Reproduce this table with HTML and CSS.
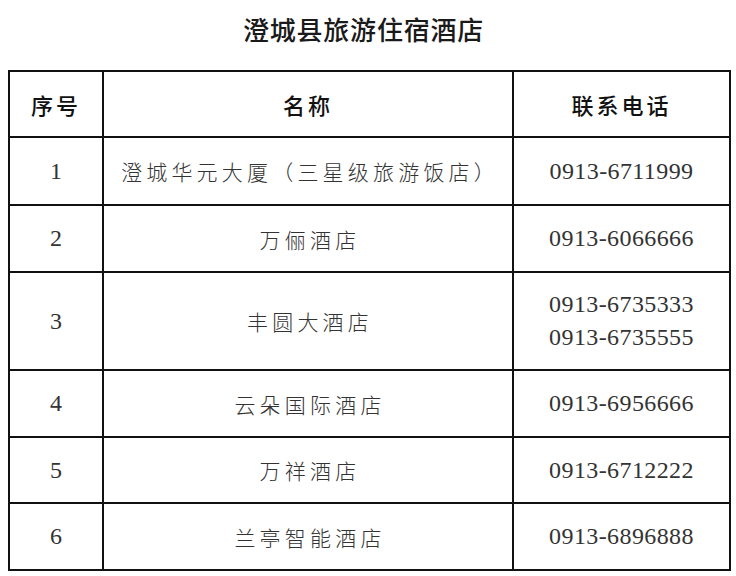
FILE: index.html
```html
<!DOCTYPE html>
<html lang="zh-CN">
<head>
<meta charset="utf-8">
<title>澄城县旅游住宿酒店</title>
<link rel="stylesheet" href="styles.css">
</head>
<body>
<div class="page">
  <h1 class="title">澄城县旅游住宿酒店</h1>
  <table class="hotels">
    <colgroup>
      <col class="c-no">
      <col class="c-name">
      <col class="c-tel">
    </colgroup>
    <thead>
      <tr class="r-head">
        <th>序号</th>
        <th>名称</th>
        <th>联系电话</th>
      </tr>
    </thead>
    <tbody>
      <tr class="r-1">
        <td class="no">1</td>
        <td class="name">澄城华元大厦（三星级旅游饭店）</td>
        <td class="tel">0913-6711999</td>
      </tr>
      <tr class="r-2">
        <td class="no">2</td>
        <td class="name">万俪酒店</td>
        <td class="tel">0913-6066666</td>
      </tr>
      <tr class="r-3">
        <td class="no">3</td>
        <td class="name">丰圆大酒店</td>
        <td class="tel"><div>0913-6735333</div><div>0913-6735555</div></td>
      </tr>
      <tr class="r-4">
        <td class="no">4</td>
        <td class="name">云朵国际酒店</td>
        <td class="tel">0913-6956666</td>
      </tr>
      <tr class="r-5">
        <td class="no">5</td>
        <td class="name">万祥酒店</td>
        <td class="tel">0913-6712222</td>
      </tr>
      <tr class="r-6">
        <td class="no">6</td>
        <td class="name">兰亭智能酒店</td>
        <td class="tel">0913-6896888</td>
      </tr>
    </tbody>
  </table>
</div>
</body>
</html>
```

FILE: styles.css
```css
html, body {
  margin: 0;
  padding: 0;
  background: #ffffff;
}

.page {
  width: 736px;
  padding: 9px 0 0 8px;
  box-sizing: border-box;
}

.title {
  margin: 0 0 21px 0;
  width: 711px;
  height: 40px;
  line-height: 40px;
  text-align: center;
  font-family: "Noto Sans CJK SC", "Noto Sans", sans-serif;
  font-weight: 500;
  font-size: 26px;
  letter-spacing: 0.8px;
  color: #1a1a1a;
}

.hotels {
  border-collapse: collapse;
  table-layout: fixed;
  width: 721px;
  border: 2px solid #111;
}

.c-no { width: 94px; }
.c-name { width: 410px; }
.c-tel { width: 217px; }

.hotels th,
.hotels td {
  border: 2px solid #111;
  padding: 0;
  text-align: center;
  vertical-align: middle;
}

.hotels th {
  font-family: "Noto Sans CJK SC", sans-serif;
  font-weight: 500;
  font-size: 22px;
  letter-spacing: 3px;
  color: #111;
}

.r-head { height: 66px; }
.r-1 { height: 68px; }
.r-2 { height: 67px; }
.r-3 { height: 98px; }
.r-4 { height: 67px; }
.r-5 { height: 66px; }
.r-6 { height: 67px; }

.no {
  font-family: "Liberation Serif", "Times New Roman", "DejaVu Serif", serif;
  font-size: 24px;
  color: #333;
}

.name {
  font-family: "Noto Sans CJK SC", sans-serif;
  font-weight: 300;
  font-size: 21px;
  letter-spacing: 4.2px;
  text-indent: 4px;
  color: #333;
}

.tel {
  font-family: "Liberation Serif", "Times New Roman", "DejaVu Serif", serif;
  font-size: 24px;
  letter-spacing: 0.4px;
  color: #333;
  line-height: 33px;
}
```
